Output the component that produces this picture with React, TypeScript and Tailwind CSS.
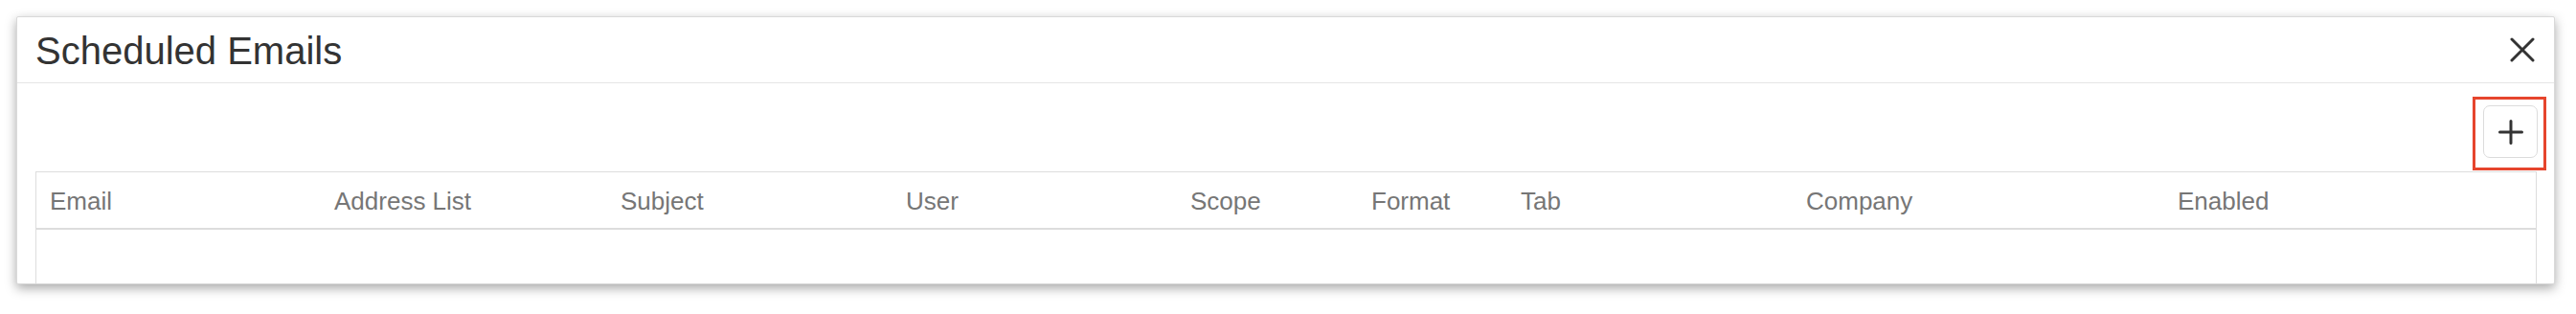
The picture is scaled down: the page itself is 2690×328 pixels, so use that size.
import React from "react";

const COLUMNS = [
  "Email",
  "Address List",
  "Subject",
  "User",
  "Scope",
  "Format",
  "Tab",
  "Company",
  "Enabled",
];

function CloseIcon() {
  return (
    <svg width="26" height="26" viewBox="0 0 26 26" fill="none" stroke="#333" strokeWidth="3" strokeLinecap="round">
      <path d="M2 2 L24 24 M24 2 L2 24" />
    </svg>
  );
}

function PlusIcon() {
  return (
    <svg width="26" height="26" viewBox="0 0 26 26" fill="none" stroke="#333" strokeWidth="3" strokeLinecap="round">
      <path d="M13 1.5 V24.5 M1.5 13 H24.5" />
    </svg>
  );
}

export default function App() {
  return (
    <div className="h-[328px] w-[2690px] bg-white pl-[17px] pt-[17px] font-['Liberation_Sans',Arial,sans-serif]">
      <div className="flex h-[280px] w-[2651px] flex-col overflow-hidden rounded-[2px] border border-[#d9d9d9] bg-white shadow-[0_4px_12px_rgba(0,0,0,0.35)]">
        {/* header */}
        <div className="flex h-[69px] shrink-0 items-start justify-between border-b border-[#e5e5e5] pl-[19px] pr-[20px]">
          <h2 className="pt-[15px] text-[40px] leading-[40px] text-[#333]">Scheduled Emails</h2>
          <button className="mt-[21px] flex h-[26px] w-[26px] items-center justify-center">
            <CloseIcon />
          </button>
        </div>

        {/* body */}
        <div className="flex flex-col pl-[19px] pr-[18px]">
          <div className="flex justify-end pt-[23px] pb-[14px]">
            <div className="relative -mr-px">
              <button className="flex h-[55px] w-[57px] items-center justify-center rounded-[7px] border border-[#dcdcdc] bg-white">
                <PlusIcon />
              </button>
              <span className="pointer-events-none absolute -top-[9px] -right-[9px] -bottom-[13px] -left-[11px] border-[3px] border-[#e6452d]" />
            </div>
          </div>

          <div className="border border-[#dddddd]">
            <div className="grid grid-cols-[297px_299px_298px_297px_189px_156px_298px_388px_1fr] border-b-2 border-[#dddddd]">
              {COLUMNS.map((col) => (
                <div key={col} className="pl-[14px] pt-[15px] pb-[13px] text-[26px] leading-[30px] text-[#767676]">
                  {col}
                </div>
              ))}
            </div>
            <div className="h-[90px]" />
          </div>
        </div>
      </div>
    </div>
  );
}
